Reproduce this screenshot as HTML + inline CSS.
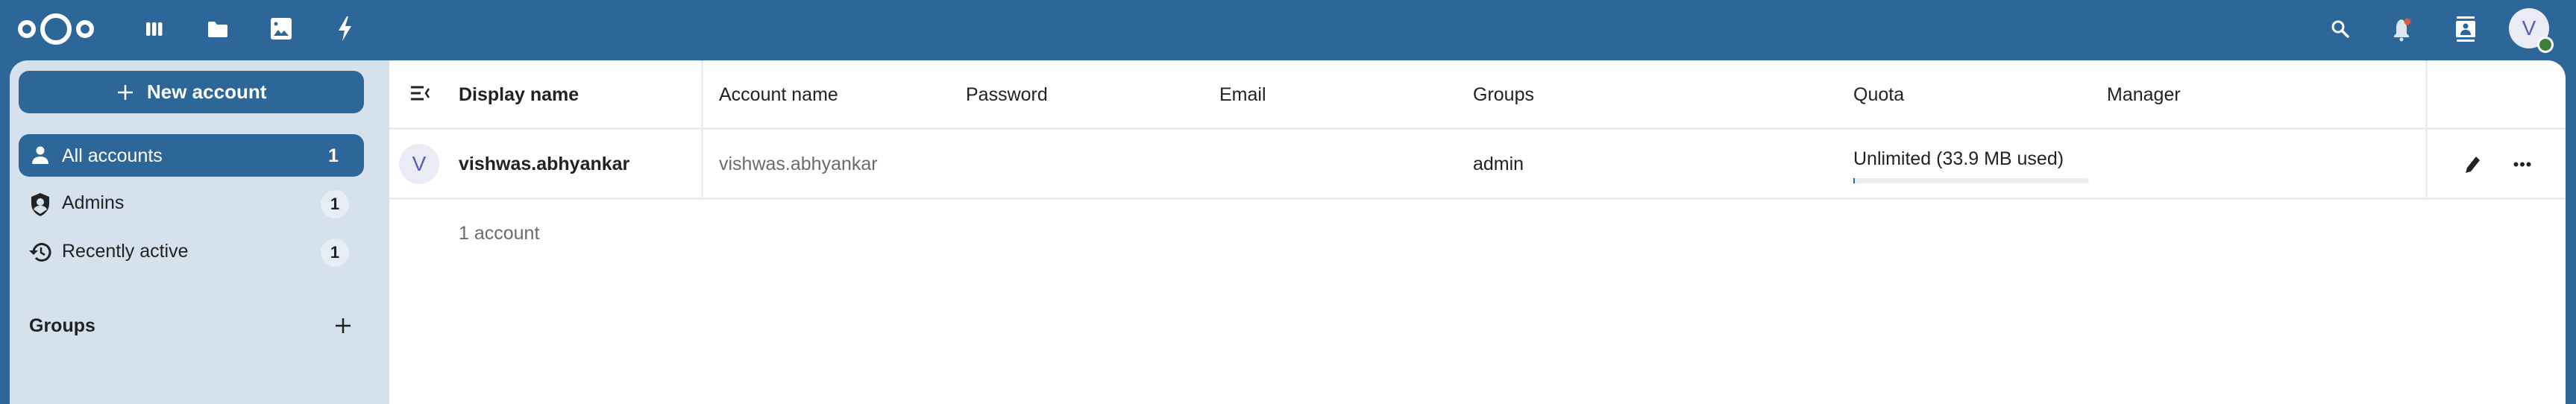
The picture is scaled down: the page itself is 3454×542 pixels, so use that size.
<!DOCTYPE html>
<html><head><meta charset="utf-8"><style>
*{margin:0;padding:0;box-sizing:border-box}
body{width:3454px;height:542px;background:#2d6699;position:relative;overflow:hidden;font-family:"Liberation Sans",sans-serif;color:#222}
.abs{position:absolute}
.side{left:13px;top:81px;width:509px;height:461px;background:#d5e1ec;border-top-left-radius:24px}
.main{left:522px;top:81px;width:2918px;height:461px;background:#fff;border-top-right-radius:24px}
.btn{left:25px;width:463px;height:57px;border-radius:14px;background:#2d6699;color:#fff}
.t{position:absolute;font-size:25px;line-height:28px;white-space:nowrap}
.cnt{position:absolute;left:430px;width:38px;height:38px;border-radius:19px;background:#e7edf4;font-size:22px;font-weight:bold;text-align:center;line-height:38px}
.hl{position:absolute;height:3px;background:#ececec}
.vl{position:absolute;width:3px;background:#ececec}
</style></head><body>
<svg class="abs" style="left:23px;top:15px" width="104" height="48" viewBox="0 0 104 48">
<circle cx="13" cy="24" r="9" fill="none" stroke="#fff" stroke-width="6"/>
<circle cx="52" cy="24" r="18" fill="none" stroke="#fff" stroke-width="6"/>
<circle cx="91" cy="24" r="9" fill="none" stroke="#fff" stroke-width="6"/>
</svg>
<svg class="abs" style="left:196px;top:29px" width="22" height="20"><rect x="0" y="1" width="5.5" height="18" rx="2" fill="#fff"/><rect x="8" y="1" width="5.5" height="18" rx="2" fill="#fff"/><rect x="16" y="1" width="5.5" height="18" rx="2" fill="#fff"/></svg>
<svg class="abs" style="left:279px;top:28px" width="26" height="22"><path d="M0 3a2 2 0 0 1 2-2h7l3 4h12a2 2 0 0 1 2 2v13a2 2 0 0 1-2 2H2a2 2 0 0 1-2-2z" fill="#fff"/></svg>
<svg class="abs" style="left:363px;top:24px" width="28" height="29"><rect x="0" y="0" width="28" height="29" rx="3" fill="#fff"/><circle cx="7" cy="8" r="2.5" fill="#2d6699"/><path d="M4 24l6-8 4 5 4-4 6 7z" fill="#2d6699"/></svg>
<svg class="abs" style="left:451px;top:22px" width="22" height="33"><path d="M14 0L3 19h8l-3 14 12-20h-8l4-13z" fill="#fff"/></svg>
<svg class="abs" style="left:3125px;top:26px" width="26" height="26"><circle cx="10" cy="10" r="7" fill="none" stroke="#fff" stroke-width="3"/><path d="M15 15l8 8" stroke="#fff" stroke-width="3.5" stroke-linecap="round"/></svg>
<svg class="abs" style="left:3207px;top:22px" width="30" height="34"><path d="M13 4c-5 1-7 6-7 11v8l-3 3v2h20v-2l-3-3v-8c0-5-3-10-7-11z" fill="#dbe6f0"/><circle cx="13" cy="31" r="2.5" fill="#dbe6f0"/><circle cx="21" cy="7" r="4.5" fill="#e05a3a"/></svg>
<svg class="abs" style="left:3292px;top:22px" width="28" height="34"><rect x="2" y="0" width="24" height="3" rx="1" fill="#fff"/><rect x="2" y="31" width="24" height="3" rx="1" fill="#fff"/><rect x="1" y="6" width="26" height="22" rx="2" fill="#fff"/><circle cx="14" cy="13" r="3.5" fill="#2d6699"/><path d="M7 25c0-5 3-7 7-7s7 2 7 7z" fill="#2d6699"/></svg>
<div class="abs" style="left:3364px;top:11px;width:54px;height:54px;border-radius:27px;background:#ebebf5;color:#5b5bb5;font-size:28px;text-align:center;line-height:54px">V</div>
<div class="abs" style="left:3402px;top:49px;width:22px;height:22px;border-radius:11px;background:#3f7d3a;border:3px solid #fff"></div>

<div class="abs side"></div>
<div class="abs main"></div>

<div class="abs btn" style="top:95px"><div class="t" style="left:172px;top:14px;font-weight:bold;font-size:26px;color:#fff">New account</div></div>
<svg class="abs" style="left:157px;top:113px" width="22" height="22"><path d="M11 1v20M1 11h20" stroke="#fff" stroke-width="2.5"/></svg>
<div class="abs btn" style="top:180px"></div>
<svg class="abs" style="left:42px;top:196px" width="24" height="24"><circle cx="12" cy="6" r="5.5" fill="#fff"/><path d="M1 24c0-7 5-10 11-10s11 3 11 10z" fill="#fff"/></svg>
<div class="t" style="left:83px;top:195px;color:#fff">All accounts</div>
<div class="t" style="left:440px;top:195px;color:#fff;font-weight:bold">1</div>

<svg class="abs" style="left:41px;top:259px" width="26" height="31"><path d="M13 0L1 5v9c0 8 5 14 12 17 7-3 12-9 12-17V5z" fill="#222"/><circle cx="13" cy="12" r="5" fill="#d5e1ec"/><path d="M4 22c2-4 5-5 9-5s7 1 9 5l-9 6z" fill="#d5e1ec"/></svg>
<div class="t" style="left:83px;top:258px">Admins</div>
<div class="cnt" style="top:255px">1</div>

<svg class="abs" style="left:39px;top:324px" width="30" height="28"><path d="M6 14a11 11 0 1 1 3 8" fill="none" stroke="#222" stroke-width="3"/><path d="M0 12l6 6 6-6z" fill="#222"/><path d="M16 8v7l5 3" fill="none" stroke="#222" stroke-width="2.5"/></svg>
<div class="t" style="left:83px;top:323px">Recently active</div>
<div class="cnt" style="top:320px">1</div>

<div class="t" style="left:39px;top:423px;font-weight:bold">Groups</div>
<svg class="abs" style="left:449px;top:426px" width="22" height="22"><path d="M11 1v20M1 11h20" stroke="#222" stroke-width="2.5"/></svg>

<div class="hl" style="left:522px;top:171px;width:2918px"></div>
<div class="hl" style="left:522px;top:265px;width:2918px"></div>
<div class="vl" style="left:940px;top:81px;height:186px"></div>
<div class="vl" style="left:3252px;top:81px;height:186px"></div>

<svg class="abs" style="left:551px;top:115px" width="26" height="20"><path d="M0 2h17M0 10h13M0 18h17" stroke="#222" stroke-width="3"/><path d="M24 4l-4 6 4 6" fill="none" stroke="#222" stroke-width="2.5"/></svg>
<div class="t" style="left:615px;top:113px;font-weight:bold">Display name</div>
<div class="t" style="left:964px;top:113px">Account name</div>
<div class="t" style="left:1295px;top:113px">Password</div>
<div class="t" style="left:1635px;top:113px">Email</div>
<div class="t" style="left:1975px;top:113px">Groups</div>
<div class="t" style="left:2485px;top:113px">Quota</div>
<div class="t" style="left:2825px;top:113px">Manager</div>

<div class="abs" style="left:535px;top:193px;width:54px;height:54px;border-radius:27px;background:#ebebf5;color:#5b5bb5;font-size:28px;text-align:center;line-height:54px">V</div>
<div class="t" style="left:615px;top:206px;font-weight:bold">vishwas.abhyankar</div>
<div class="t" style="left:964px;top:206px;color:#6b6b6b">vishwas.abhyankar</div>
<div class="t" style="left:1975px;top:206px">admin</div>
<div class="t" style="left:2485px;top:199px">Unlimited (33.9 MB used)</div>
<div class="abs" style="left:2485px;top:239px;width:316px;height:7px;border-radius:4px;background:#ececec"></div>
<div class="abs" style="left:2485px;top:239px;width:2px;height:7px;background:#2d6699"></div>
<svg class="abs" style="left:3304px;top:208px" width="24" height="26"><path d="M2 24l2-7L16 2l5 5-12 15z" fill="#222"/></svg>
<svg class="abs" style="left:3370px;top:217px" width="24" height="7"><circle cx="3.5" cy="3.5" r="3" fill="#222"/><circle cx="12" cy="3.5" r="3" fill="#222"/><circle cx="20.5" cy="3.5" r="3" fill="#222"/></svg>

<div class="t" style="left:615px;top:299px;color:#6b6b6b">1 account</div>
</body></html>
